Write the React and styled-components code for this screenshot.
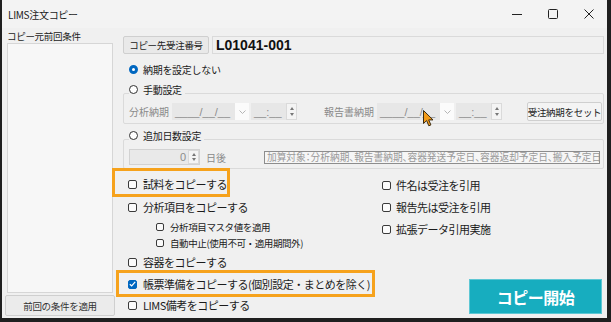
import React from 'react';
import styled, { createGlobalStyle } from 'styled-components';

const GlobalStyle = createGlobalStyle`
  html, body {
    margin: 0;
    padding: 0;
    background: #1f1f1f;
  }
`;

const jp = `"Noto Sans CJK JP", "Noto Sans", "Liberation Sans", sans-serif`;

const Frame = styled.div`
  width: 611px;
  height: 322px;
  box-sizing: border-box;
  padding: 0 4px 4px 2px;
  background: #1f1f1f;
  display: flex;
`;

const Window = styled.div`
  position: relative;
  flex: 1;
  display: flex;
  flex-direction: column;
  background: #f0f0f0;
  font-family: ${jp};
  color: #1b1b1b;
`;

const TitleBar = styled.div`
  height: 28px;
  display: flex;
  align-items: center;
  padding-left: 6px;
  background: #f3f3f3;
  font-size: 10px;
  letter-spacing: -0.3px;
`;

const TitleText = styled.span`
  flex: 1;
`;

const WinButton = styled.div`
  width: 36px;
  height: 28px;
  display: flex;
  align-items: center;
  justify-content: center;
`;

const Body = styled.div`
  flex: 1;
  display: flex;
`;

const LeftPane = styled.div`
  width: 113px;
  display: flex;
  flex-direction: column;
`;

const PaneLabel = styled.div`
  height: 15px;
  padding: 1px 0 0 5px;
  box-sizing: border-box;
  font-size: 9.5px;
  letter-spacing: -0.3px;
  line-height: 15px;
`;

const HistoryList = styled.div`
  margin-left: 5px;
  width: 106px;
  height: 250px;
  box-sizing: border-box;
  background: #f7f7f7;
  border: 1px solid #d6d6d6;
`;

const Button = styled.button`
  font-family: ${jp};
  font-size: ${({ $size }) => $size || 9.5}px;
  letter-spacing: -0.3px;
  white-space: nowrap;
  color: #222;
  background: ${({ $bg }) => $bg || '#e9e9e9'};
  border: 1px solid #cfcfcf;
  border-radius: 2px;
  padding: 0;
  box-sizing: border-box;
  width: ${({ $w }) => $w}px;
  height: ${({ $h }) => $h}px;
  display: flex;
  align-items: center;
  justify-content: center;
  flex-shrink: 0;
`;

const ApplyButton = styled(Button)`
  margin: 2px 0 0 3px;
  color: #333;
`;

const RightPane = styled.div`
  flex: 1;
  display: flex;
  flex-direction: column;
  padding: 8px 3px 0 8px;
  min-width: 0;
`;

const OrderRow = styled.div`
  height: 18px;
  display: flex;
  gap: 3px;
`;

const OrderBox = styled.div`
  flex: 1;
  box-sizing: border-box;
  background: #f0f0f0;
  border: 1px solid #dadada;
  padding-left: 3px;
  display: flex;
  align-items: center;
  font-family: "Liberation Sans", Arial, sans-serif;
  font-weight: bold;
  font-size: 14px;
  color: #111;
`;

const RadioRow = styled.label`
  position: relative;
  z-index: 1;
  align-self: flex-start;
  height: 16px;
  margin-top: ${({ $mt }) => $mt}px;
  margin-left: 6px;
  padding-right: 3px;
  background: #f0f0f0;
  display: inline-flex;
  align-items: center;
  gap: 5px;
  font-size: 10px;
  letter-spacing: -0.3px;
`;

const RadioDot = styled.span`
  width: 9px;
  height: 9px;
  border-radius: 50%;
  box-sizing: border-box;
  border: ${({ $on }) => ($on ? '3px solid #0067c0' : '1px solid #333')};
  background: #fff;
`;

const GroupBox = styled.div`
  margin-top: -4px;
  height: ${({ $h }) => $h}px;
  box-sizing: border-box;
  border: 1px solid #dadada;
  border-radius: 2px;
  padding: ${({ $pt }) => $pt}px 0 0 5px;
  display: flex;
  align-items: flex-start;
`;

const FieldRow = styled.div`
  flex: 1;
  height: ${({ $h }) => $h}px;
  display: flex;
  align-items: center;
`;

const DimLabel = styled.span`
  font-size: 10px;
  color: #8a8a8a;
  margin-left: ${({ $ml }) => $ml || 0}px;
  margin-right: 3px;
  white-space: nowrap;
`;

const Mask = styled.div`
  width: ${({ $w }) => $w}px;
  height: 17px;
  background: #e7e7e7;
  display: flex;
  align-items: center;
  padding-left: 3px;
  box-sizing: border-box;
  font-family: "Liberation Sans", Arial, sans-serif;
  font-size: 11px;
  color: #8c8c8c;
`;

const DropBtn = styled.div`
  width: 14px;
  height: 17px;
  background: #fbfbfb;
  display: flex;
  align-items: center;
  justify-content: center;
  margin-right: 2px;
`;

const Spin = styled.div`
  width: 11px;
  height: ${({ $h }) => $h || 17}px;
  box-sizing: border-box;
  background: #f4f4f4;
  border: 1px solid #dadada;
  display: flex;
  flex-direction: column;
  align-items: center;
  justify-content: space-evenly;
`;

const Tri = styled.span`
  width: 0;
  height: 0;
  border-left: 2px solid transparent;
  border-right: 2px solid transparent;
  ${({ $down }) => ($down ? 'border-top: 3px solid #777;' : 'border-bottom: 3px solid #777;')}
`;

const SetButton = styled(Button)`
  margin-left: auto;
  margin-right: 1px;
  background: #f4f4f4;
`;

const NumBox = styled.div`
  width: 71px;
  height: 16px;
  box-sizing: border-box;
  border: 1px solid #d2d2d2;
  background: #e9e9e9;
  display: flex;
  justify-content: flex-end;
  font-family: "Liberation Sans", Arial, sans-serif;
  font-size: 11px;
  color: #8c8c8c;
`;

const NumValue = styled.span`
  line-height: 14px;
  padding-right: 2px;
`;

const HintBox = styled.div`
  margin-left: auto;
  margin-right: 3px;
  width: 336px;
  height: 13px;
  box-sizing: border-box;
  border: 1px solid #8d8d8d;
  background: #f6f6f6;
  font-size: 9.7px;
  font-feature-settings: "palt" 1;
  line-height: 11px;
  padding-left: 2px;
  color: #9a9a9a;
  white-space: nowrap;
  overflow: hidden;
`;

const Checks = styled.div`
  flex: 1;
  display: flex;
`;

const CheckCol = styled.div`
  width: ${({ $w }) => ($w ? `${$w}px` : 'auto')};
  flex: ${({ $w }) => ($w ? 'none' : '1')};
  display: flex;
  flex-direction: column;
  padding: ${({ $pt }) => $pt}px 0 0 5px;
`;

const CheckItem = styled.label`
  position: relative;
  align-self: flex-start;
  height: ${({ $h }) => $h || 20}px;
  margin-top: ${({ $mt }) => $mt || 0}px;
  margin-left: ${({ $indent }) => $indent || 0}px;
  display: inline-flex;
  align-items: center;
  gap: ${({ $gap }) => $gap || 6}px;
  font-size: ${({ $small }) => ($small ? 9.5 : 11)}px;
  letter-spacing: ${({ $small }) => ($small ? -0.4 : -0.5)}px;
  white-space: nowrap;

  ${({ $hl }) =>
    $hl &&
    `
    &::after {
      content: '';
      position: absolute;
      left: ${$hl.l}px;
      top: ${$hl.t}px;
      width: ${$hl.w}px;
      height: ${$hl.h}px;
      box-sizing: border-box;
      border: 3px solid #f6a21c;
    }
  `}
`;

const Box = styled.span`
  width: ${({ $s }) => $s || 9}px;
  height: ${({ $s }) => $s || 9}px;
  box-sizing: border-box;
  border-radius: 2px;
  border: 1px solid ${({ $on }) => ($on ? '#0067c0' : '#3a3a3a')};
  background: ${({ $on }) => ($on ? '#0067c0' : '#fbfbfb')};
  display: flex;
  align-items: center;
  justify-content: center;
  flex-shrink: 0;
`;

const StartButton = styled.button`
  margin: auto 2px 4px 0;
  align-self: flex-end;
  width: 133px;
  height: 35px;
  box-sizing: border-box;
  background: #17adbf;
  border: 1px solid #5ec7d4;
  color: #fff;
  font-family: ${jp};
  font-weight: bold;
  font-size: 16px;
  letter-spacing: -0.5px;
  padding: 0;
`;

const Cursor = styled.svg`
  position: absolute;
  left: 421px;
  top: 110px;
`;

const Chevron = () => (
  <svg width="7" height="4" viewBox="0 0 7 4">
    <path d="M0.5 0.5 L3.5 3.5 L6.5 0.5" fill="none" stroke="#b5b5b5" strokeWidth="1" />
  </svg>
);

const DateTime = () => (
  <>
    <Mask $w={63}>____/__/__</Mask>
    <DropBtn>
      <Chevron />
    </DropBtn>
    <Mask $w={35}>__:__</Mask>
    <Spin>
      <Tri />
      <Tri $down />
    </Spin>
  </>
);

const Check = ({ on, size, children, ...rest }) => (
  <CheckItem {...rest}>
    <Box $on={on} $s={size}>
      {on && (
        <svg width="7" height="6" viewBox="0 0 7 6">
          <path d="M0.8 3.2 L2.7 5 L6.2 0.9" fill="none" stroke="#fff" strokeWidth="1.2" />
        </svg>
      )}
    </Box>
    <span>{children}</span>
  </CheckItem>
);

export default function App() {
  return (
    <>
      <GlobalStyle />
      <Frame>
        <Window>
          <TitleBar>
            <TitleText>LIMS注文コピー</TitleText>
            <WinButton>
              <svg width="10" height="10" viewBox="0 0 10 10">
                <path d="M0 5.5 H10" stroke="#222" strokeWidth="1" />
              </svg>
            </WinButton>
            <WinButton>
              <svg width="10" height="10" viewBox="0 0 10 10">
                <rect x="0.5" y="0.5" width="9" height="9" rx="1" fill="none" stroke="#222" strokeWidth="1" />
              </svg>
            </WinButton>
            <WinButton>
              <svg width="10" height="10" viewBox="0 0 10 10">
                <path d="M0.5 0.5 L9.5 9.5 M9.5 0.5 L0.5 9.5" stroke="#222" strokeWidth="1" />
              </svg>
            </WinButton>
          </TitleBar>

          <Body>
            <LeftPane>
              <PaneLabel>コピー元前回条件</PaneLabel>
              <HistoryList />
              <ApplyButton $w={110} $h={21} $bg="#ebebeb">
                前回の条件を適用
              </ApplyButton>
            </LeftPane>

            <RightPane>
              <OrderRow>
                <Button $w={86} $h={18}>
                  コピー先受注番号
                </Button>
                <OrderBox>L01041-001</OrderBox>
              </OrderRow>

              <RadioRow $mt={7}>
                <RadioDot $on />
                納期を設定しない
              </RadioRow>
              <RadioRow $mt={4}>
                <RadioDot />
                手動設定
              </RadioRow>
              <GroupBox $h={31} $pt={8}>
                <FieldRow $h={19}>
                  <DimLabel>分析納期</DimLabel>
                  <DateTime />
                  <DimLabel $ml={27}>報告書納期</DimLabel>
                  <DateTime />
                  <SetButton $w={75} $h={19}>
                    受注納期をセット
                  </SetButton>
                </FieldRow>
              </GroupBox>

              <RadioRow $mt={3}>
                <RadioDot />
                追加日数設定
              </RadioRow>
              <GroupBox $h={30} $pt={9}>
                <FieldRow $h={16}>
                  <NumBox>
                    <NumValue>0</NumValue>
                    <Spin $h={14}>
                      <Tri />
                      <Tri $down />
                    </Spin>
                  </NumBox>
                  <DimLabel $ml={6}>日後</DimLabel>
                  <HintBox>加算対象：分析納期、報告書納期、容器発送予定日、容器返却予定日、搬入予定日</HintBox>
                </FieldRow>
              </GroupBox>

              <Checks>
                <CheckCol $w={249} $pt={5}>
                  <Check $hl={{ l: -16, t: -6, w: 118, h: 29 }}>試料をコピーする</Check>
                  <Check $mt={3}>分析項目をコピーする</Check>
                  <Check $mt={2} $h={16} $indent={28} $small size={8}>
                    分析項目マスタ値を適用
                  </Check>
                  <Check $h={16} $indent={28} $small size={8}>
                    自動中止(使用不可・適用期間外)
                  </Check>
                  <Check $mt={1}>容器をコピーする</Check>
                  <Check $mt={2} on $hl={{ l: -12, t: -4, w: 259, h: 27 }}>
                    帳票準備をコピーする(個別設定・まとめを除く)
                  </Check>
                  <Check $mt={1}>LIMS備考をコピーする</Check>
                </CheckCol>
                <CheckCol $pt={6}>
                  <Check $gap={5}>件名は受注を引用</Check>
                  <Check $gap={5} $mt={2}>
                    報告先は受注を引用
                  </Check>
                  <Check $gap={5} $mt={2}>
                    拡張データ引用実施
                  </Check>
                  <StartButton>コピー開始</StartButton>
                </CheckCol>
              </Checks>
            </RightPane>
          </Body>

          <Cursor width="11" height="17" viewBox="0 0 11 17">
            <path d="M0.5 0.5 L0.5 13.5 L3.6 10.6 L5.8 15.8 L7.9 14.9 L5.7 9.9 L10 9.9 Z" fill="#f29a18" stroke="#3a2a10" strokeWidth="1" strokeLinejoin="round" />
          </Cursor>
        </Window>
      </Frame>
    </>
  );
}
